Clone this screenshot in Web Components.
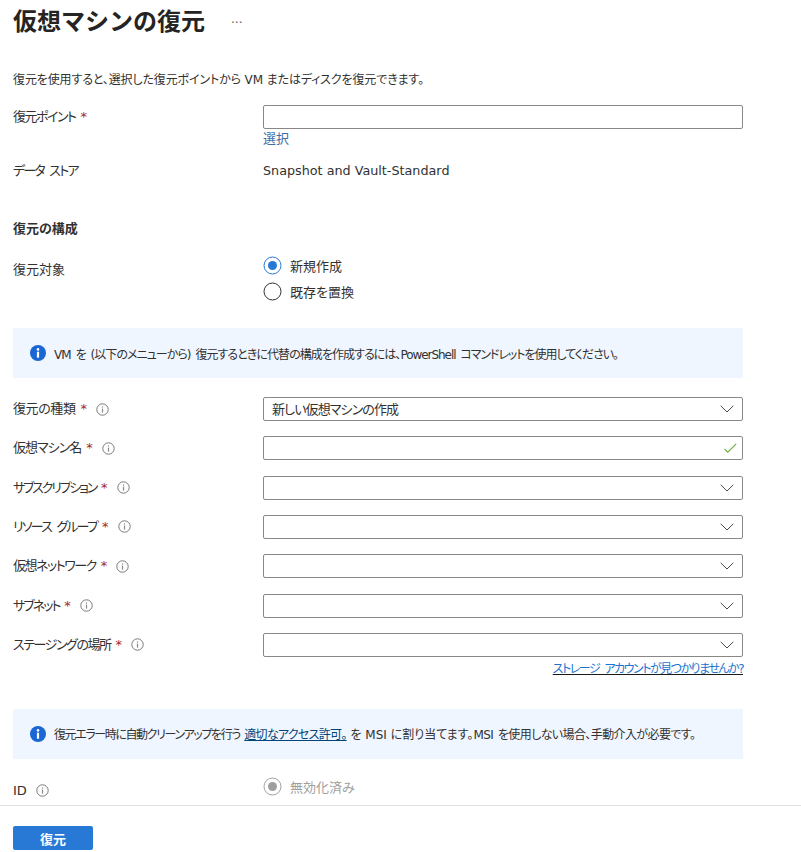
<!DOCTYPE html>
<html lang="ja">
<head>
<meta charset="utf-8">
<title>仮想マシンの復元</title>
<style>
  html, body { margin: 0; height: 100%; }
  body {
    font-family: "DejaVu Sans", "Noto Sans CJK JP", sans-serif;
    font-size: 13px;
    font-feature-settings: "palt";
    color: #323130;
    background: #fff;
  }
  .t0 { letter-spacing: 0; }
  .t1 { letter-spacing: -.6px; word-spacing: 1.5px; }
  .t2 { letter-spacing: -.7px; }
  .t3 { letter-spacing: -.95px; word-spacing: 2px; }
  .t4 { letter-spacing: -1.05px; word-spacing: 2px; }
  .t5 { letter-spacing: -1.4px; word-spacing: 2px; }
  a { color: #004578; }
</style>
</head>
<body>
<az-blade>
  <az-title slot="title">仮想マシンの復元</az-title>
  <az-intro>復元を使用すると、選択した復元ポイントから VM またはディスクを復元できます。</az-intro>

  <az-field label="復元ポイント" track="-1.5" required style="margin-top:14px">
    <az-input></az-input>
    <az-link>選択</az-link>
  </az-field>
  <az-field label="データ ストア" track="-1.8" style="margin-top:11px"><span style="line-height:24px;font-size:12.75px">Snapshot and Vault-Standard</span></az-field>

  <az-section style="margin-top:36px">復元の構成</az-section>
  <az-field label="復元対象" style="margin-top:19px">
    <az-radio checked>新規作成</az-radio>
    <az-radio>既存を置換</az-radio>
  </az-field>

  <az-info style="margin-top:18px"><span class="t3">VM を (以下のメニューから) 復元するときに代替の構成を作成するには、</span><span class="t4">PowerShell コマンドレットを使用してください。</span></az-info>

  <az-form-group style="margin-top:19px">
    <az-field label="復元の種類" track="-.4" required info><az-select value="新しい仮想マシンの作成"></az-select></az-field>
    <az-field label="仮想マシン名" track="-1" required info><az-input valid></az-input></az-field>
    <az-field label="サブスクリプション" track="-2.2" required info><az-select></az-select></az-field>
    <az-field label="リソース グループ" track="-1.8" required info><az-select></az-select></az-field>
    <az-field label="仮想ネットワーク" track="-1.5" required info><az-select></az-select></az-field>
    <az-field label="サブネット" track="-2" required info><az-select></az-select></az-field>
    <az-field label="ステージングの場所" track="-1.45" required info>
      <az-select></az-select>
      <az-link align="right" underline style="margin-top:3px">ストレージ アカウントが見つかりませんか?</az-link>
    </az-field>
  </az-form-group>

  <az-info style="margin-top:31px"><span class="t5">復元エラー時に自動クリーンアップを行う </span><a href="#" class="t2">適切なアクセス許可。</a><span class="t0"> を MSI に割り当てます。</span><span class="t1">MSI を使用しない場合、手動介入が必要です。</span></az-info>

  <az-field label="ID" info style="margin-top:20px">
    <az-radio checked disabled style="margin-top:-5px">無効化済み</az-radio>
  </az-field>

  <az-button slot="footer">復元</az-button>
</az-blade>

<script>
const INFO_ICON = `<svg width="13" height="13" viewBox="0 0 13 13" fill="none"><circle cx="6.5" cy="6.5" r="5.7" stroke="#7a7978"/><rect x="5.9" y="5.6" width="1.2" height="4" fill="#8a8886"/><rect x="5.9" y="3.4" width="1.2" height="1.2" fill="#8a8886"/></svg>`;

class AzBlade extends HTMLElement {
  constructor() {
    super();
    const shadow = this.attachShadow({ mode: 'open' });
    shadow.innerHTML = `
      <style>
        :host { display: flex; flex-direction: column; height: 852px; overflow: hidden; }
        .main { flex: 1; min-height: 0; overflow: hidden; padding: 0 58px 0 13px; }
        .head { display: flex; align-items: center; height: 44px; }
        .more { margin: 2px 0 0 26px; color: #605e5c; font-size: 12px; }
        footer { flex: none; height: 47px; box-sizing: border-box; border-top: 1px solid #e1dfdd; padding: 20px 13px 0; }
      </style>
      <div class="main">
        <div class="head"><slot name="title"></slot><span class="more">···</span></div>
        <slot></slot>
      </div>
      <footer><slot name="footer"></slot></footer>
    `;
  }
}

class AzTitle extends HTMLElement {
  constructor() {
    super();
    this.attachShadow({ mode: 'open' }).innerHTML = `
      <style>:host { display: block; font-size: 24px; font-weight: 700; color: #252423; line-height: 32px; font-feature-settings: normal; }</style>
      <slot></slot>`;
  }
}

class AzIntro extends HTMLElement {
  constructor() {
    super();
    this.attachShadow({ mode: 'open' }).innerHTML = `
      <style>:host { display: block; margin-top: 25px; line-height: 22px; font-size: 12px; letter-spacing: -.12px; }</style>
      <slot></slot>`;
  }
}

class AzSection extends HTMLElement {
  constructor() {
    super();
    this.attachShadow({ mode: 'open' }).innerHTML = `
      <style>:host { display: block; font-weight: 700; font-size: 13px; line-height: 20px; }</style>
      <slot></slot>`;
  }
}

class AzField extends HTMLElement {
  constructor() {
    super();
    this.attachShadow({ mode: 'open' });
  }

  connectedCallback() {
    const star = this.hasAttribute('required') ? '<span class="req">*</span>' : '';
    const info = this.hasAttribute('info') ? `<span class="info">${INFO_ICON}</span>` : '';
    const track = this.getAttribute('track') || '0';
    this.shadowRoot.innerHTML = `
      <style>
        :host { display: grid; grid-template-columns: 250px 480px; }
        .label { display: flex; align-items: flex-start; line-height: 24px; }
        .name { letter-spacing: ${track}px; word-spacing: 3px; white-space: nowrap; }
        .req { color: #a4262c; margin-left: 5px; }
        .info { margin-left: 9px; height: 24px; display: flex; align-items: center; }
        .value { display: flex; flex-direction: column; min-width: 0; }
      </style>
      <div class="label"><span class="name">${this.getAttribute('label')}</span>${star}${info}</div>
      <div class="value"><slot></slot></div>
    `;
  }
}

class AzFormGroup extends HTMLElement {
  constructor() {
    super();
    this.attachShadow({ mode: 'open' }).innerHTML = `
      <style>:host { display: flex; flex-direction: column; gap: 15.33px; }</style>
      <slot></slot>`;
  }
}

class AzInput extends HTMLElement {
  constructor() {
    super();
    this.attachShadow({ mode: 'open' });
  }

  connectedCallback() {
    const check = this.hasAttribute('valid')
      ? `<svg width="13" height="11" viewBox="0 0 13 11" fill="none"><path d="M.6 6L3.8 9.2L12.2 .9" stroke="#6bb13c" stroke-width="1.1"/></svg>` : '';
    this.shadowRoot.innerHTML = `
      <style>
        :host { display: flex; align-items: center; justify-content: flex-end; height: 24px; box-sizing: border-box; border: 1px solid #8a8886; border-radius: 2px; padding-right: 5px; }
      </style>
      ${check}
    `;
  }
}

class AzSelect extends HTMLElement {
  constructor() {
    super();
    this.attachShadow({ mode: 'open' });
  }

  connectedCallback() {
    this.shadowRoot.innerHTML = `
      <style>
        :host { display: flex; align-items: center; justify-content: space-between; height: 24px; box-sizing: border-box; border: 1px solid #8a8886; border-radius: 2px; padding: 0 8px; }
        span { letter-spacing: -.9px; position: relative; top: -1px; }
      </style>
      <span>${this.getAttribute('value') || ''}</span>
      <svg width="14" height="8" viewBox="0 0 14 8" fill="none"><path d="M.7 .8L7 7L13.3 .8" stroke="#4a4847" stroke-width="1"/></svg>
    `;
  }
}

class AzLink extends HTMLElement {
  constructor() {
    super();
    this.attachShadow({ mode: 'open' });
  }

  connectedCallback() {
    const right = this.getAttribute('align') === 'right';
    const u = this.hasAttribute('underline');
    this.shadowRoot.innerHTML = `
      <style>
        :host { display: block; text-align: ${right ? 'right' : 'left'}; line-height: 18px; margin-top: 1px; color: ${u ? '#1a73d0' : '#3a6ea5'}; font-size: ${u ? '12px' : '13px'}; letter-spacing: ${u ? '-1.5px' : '0'}; word-spacing: 3px; }
        a { color: inherit; text-decoration: ${u ? 'underline #1b1a19' : 'none'}; }
      </style>
      <a href="#"><slot></slot></a>
    `;
  }
}

class AzRadio extends HTMLElement {
  constructor() {
    super();
    this.attachShadow({ mode: 'open' });
  }

  connectedCallback() {
    const on = this.hasAttribute('checked');
    const off = this.hasAttribute('disabled');
    const ring = off ? '#a19f9d' : on ? '#2878d6' : '#323130';
    const dot = off ? '#a19f9d' : '#2878d6';
    this.shadowRoot.innerHTML = `
      <style>
        :host { display: flex; align-items: center; gap: 8px; height: 26px; color: ${off ? '#a19f9d' : 'inherit'}; margin-top: -6px; margin-bottom: 6px; }
        svg { flex: none; }
      </style>
      <svg width="19" height="19" viewBox="0 0 19 19" fill="none">
        <circle cx="9.5" cy="9.5" r="8.5" stroke="${ring}" stroke-width="1"/>
        ${on ? `<circle cx="9.5" cy="9.5" r="4.5" fill="${dot}"/>` : ''}
      </svg>
      <span><slot></slot></span>
    `;
  }
}

class AzInfo extends HTMLElement {
  constructor() {
    super();
    this.attachShadow({ mode: 'open' }).innerHTML = `
      <style>
        :host { display: flex; align-items: center; gap: 8px; height: 50px; box-sizing: border-box; padding: 0 17px; background: #f0f6ff; font-size: 12px; white-space: nowrap; }
        svg { flex: none; }
      </style>
      <svg width="16" height="16" viewBox="0 0 16 16"><circle cx="8" cy="8" r="8" fill="#1a66d4"/><rect x="6.9" y="6.7" width="2.2" height="6" fill="#fff"/><circle cx="8" cy="4.4" r="1.3" fill="#fff"/></svg>
      <span><slot></slot></span>`;
  }
}

class AzButton extends HTMLElement {
  constructor() {
    super();
    this.attachShadow({ mode: 'open' }).innerHTML = `
      <style>
        :host { display: flex; align-items: center; justify-content: center; width: 80px; height: 24px; background: #2878d6; color: #fff; font-weight: 700; border-radius: 2px; }
      </style>
      <slot></slot>`;
  }
}

customElements.define('az-blade', AzBlade);
customElements.define('az-title', AzTitle);
customElements.define('az-intro', AzIntro);
customElements.define('az-section', AzSection);
customElements.define('az-field', AzField);
customElements.define('az-form-group', AzFormGroup);
customElements.define('az-input', AzInput);
customElements.define('az-select', AzSelect);
customElements.define('az-link', AzLink);
customElements.define('az-radio', AzRadio);
customElements.define('az-info', AzInfo);
customElements.define('az-button', AzButton);
</script>
</body>
</html>
